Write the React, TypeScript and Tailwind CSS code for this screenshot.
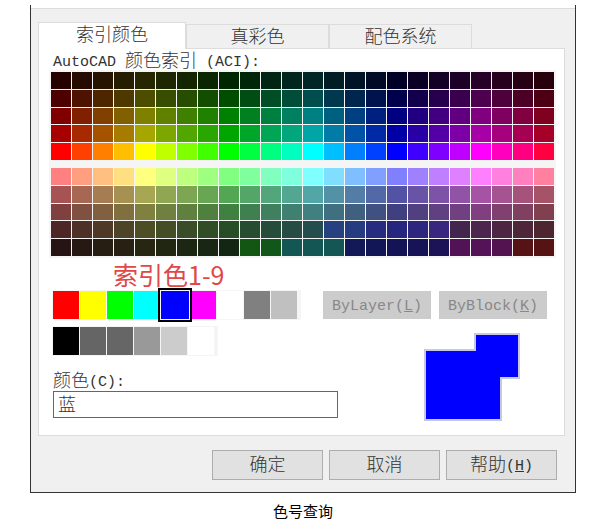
import { useState } from 'react';
import type { ReactNode } from 'react';
import clsx from 'clsx';

const COLUMNS = 24;

const tabs = ['索引颜色', '真彩色', '配色系统'];

const standardColors = [
  { index: 1, name: '红', hex: '#ff0000' },
  { index: 2, name: '黄', hex: '#ffff00' },
  { index: 3, name: '绿', hex: '#00ff00' },
  { index: 4, name: '青', hex: '#00ffff' },
  { index: 5, name: '蓝', hex: '#0000ff' },
  { index: 6, name: '洋红', hex: '#ff00ff' },
  { index: 7, name: '白', hex: '#ffffff' },
  { index: 8, name: '8', hex: '#808080' },
  { index: 9, name: '9', hex: '#c0c0c0' },
];

const grayColors = [
  { index: 250, name: '250', hex: '#000000' },
  { index: 251, name: '251', hex: '#656565' },
  { index: 252, name: '252', hex: '#666666' },
  { index: 253, name: '253', hex: '#999999' },
  { index: 254, name: '254', hex: '#cccccc' },
  { index: 255, name: '255', hex: '#ffffff' },
];

// The darkest shades do not follow the hue wheel everywhere
const dimOverrides: Record<number, string> = {
  13: '#264080',
  14: '#263c80',
  15: '#262c80',
  16: '#26267f',
  17: '#2d267f',
  18: '#38267f',
};

const darkOverrides: Record<number, string> = {
  9: '#135613',
  10: '#13561a',
  11: '#135654',
  12: '#135654',
  13: '#135654',
  14: '#131856',
  15: '#131656',
  16: '#131356',
  17: '#161356',
  18: '#1c1356',
  19: '#521356',
  20: '#541356',
  21: '#521350',
  22: '#561316',
  23: '#561313',
};

interface Shade {
  value: number;
  saturation: number;
  overrides?: Record<number, string>;
}

const fullShades: Shade[] = [
  { value: 0.15, saturation: 1 },
  { value: 0.3, saturation: 1 },
  { value: 0.5, saturation: 1 },
  { value: 0.65, saturation: 1 },
  { value: 1, saturation: 1 },
];

const paleShades: Shade[] = [
  { value: 1, saturation: 0.5 },
  { value: 0.65, saturation: 0.5 },
  { value: 0.5, saturation: 0.5 },
  { value: 0.3, saturation: 0.5, overrides: dimOverrides },
  { value: 0.15, saturation: 0.5, overrides: darkOverrides },
];

function hsv(hue: number, saturation: number, value: number) {
  const channel = (n: number) => {
    const k = (n + hue / 60) % 6;
    const c = value - value * saturation * Math.max(0, Math.min(k, 4 - k, 1));
    return Math.round(c * 255);
  };
  return `rgb(${channel(5)}, ${channel(3)}, ${channel(1)})`;
}

function Latin({ children }: { children: ReactNode }) {
  return (
    <span className="inline-block align-[1px] whitespace-pre font-['Liberation_Mono',monospace] text-[15px] leading-none font-normal">
      {children}
    </span>
  );
}

interface PaletteProps {
  shades: Shade[];
  onPick: (hex: string, name: string) => void;
}

function Palette({ shades, onPick }: PaletteProps) {
  return (
    <div className="grid h-[88px] grid-cols-[repeat(24,minmax(0,1fr))] grid-rows-5 gap-px">
      {shades.map((shade, row) =>
        Array.from({ length: COLUMNS }, (_, col) => {
          const color = shade.overrides?.[col] ?? hsv(col * 15, shade.saturation, shade.value);
          return (
            <button
              key={`${row}-${col}`}
              type="button"
              aria-label={color}
              onClick={() => onPick(color, color)}
              style={{ backgroundColor: color }}
            />
          );
        })
      )}
    </div>
  );
}

interface SwatchRowProps {
  colors: typeof standardColors;
  selected: string;
  onPick: (hex: string, name: string) => void;
}

function SwatchRow({ colors, selected, onPick }: SwatchRowProps) {
  return (
    <div className="flex w-fit gap-px bg-[#f5f5f5] py-px pr-1 pl-px">
      {colors.map(({ index, name, hex }) => (
        <button
          key={index}
          type="button"
          aria-label={name}
          onClick={() => onPick(hex, name)}
          className={clsx(
            'h-7',
            selected === name
              ? 'relative z-10 w-7 outline-2 outline-offset-1 outline-black'
              : 'w-[26px]'
          )}
          style={{ backgroundColor: hex }}
        />
      ))}
    </div>
  );
}

function ActionButton({ children }: { children: ReactNode }) {
  return (
    <button
      type="button"
      className="h-[30px] w-[111px] border border-[#adadad] bg-[#e1e1e1] pb-1"
    >
      {children}
    </button>
  );
}

export default function App() {
  const [activeTab, setActiveTab] = useState(tabs[0]);
  const [color, setColor] = useState({ hex: '#0000ff', name: '蓝' });

  const pick = (hex: string, name: string) => setColor({ hex, name });

  return (
    <main className="bg-white pt-[5px] pr-6 pl-[30px] font-['Noto_Sans_CJK_SC',sans-serif] text-[18px] leading-5 font-light text-[#333]">
      <section className="border-x border-b border-[#333] pt-[3px]">
        <div className="border-t border-[#dcdcdc] bg-[#f0f0f0] pt-[13px] pr-[10px] pb-3 pl-[7px]">
          {/* Tabs */}
          <div role="tablist" className="flex items-end">
            {tabs.map((tab) => (
              <button
                key={tab}
                type="button"
                role="tab"
                aria-selected={activeTab === tab}
                onClick={() => setActiveTab(tab)}
                className={clsx(
                  'border border-b-0 border-[#dcdcdc]',
                  activeTab === tab
                    ? 'relative z-10 -mb-px h-[27px] w-[148px] bg-white pb-1.5'
                    : 'h-6 w-[143px] bg-[#f0f0f0] pb-1'
                )}
              >
                {tab}
              </button>
            ))}
          </div>

          {/* Index color panel */}
          <div className="border border-[#dcdcdc] bg-white pr-2 pb-[14px] pl-[10px]">
            <h2 className="h-[21px] pl-1">
              <Latin>AutoCAD </Latin>颜色索引<Latin> (ACI):</Latin>
            </h2>
            <div className="flex flex-col gap-2 bg-[#f5f5f5] p-0.5">
              <Palette shades={fullShades} onPick={pick} />
              <Palette shades={paleShades} onPick={pick} />
            </div>

            <p className="pl-16 text-[25px] leading-8 font-normal text-[#e04848]">索引色1-9</p>

            <div className="flex items-center justify-between pr-[9px] pl-[3px]">
              <SwatchRow colors={standardColors} selected={color.name} onPick={pick} />
              <div className="flex gap-2 text-[#888]">
                <button type="button" disabled className="h-7 w-[108px] bg-[#ccc] pb-1">
                  <Latin>ByLayer(<u>L</u>)</Latin>
                </button>
                <button type="button" disabled className="h-7 w-[108px] bg-[#ccc] pb-1">
                  <Latin>ByBlock(<u>K</u>)</Latin>
                </button>
              </div>
            </div>

            <div className="mt-1.5 flex justify-between pr-9 pl-[3px]">
              <div>
                <SwatchRow colors={grayColors} selected={color.name} onPick={pick} />
                <label htmlFor="color-name" className="mt-[13px] block h-[22px] pl-px">
                  颜色<Latin>(C):</Latin>
                </label>
                <input
                  id="color-name"
                  type="text"
                  value={color.name}
                  onChange={(e) => setColor({ ...color, name: e.target.value })}
                  className="ml-px block h-[27px] w-[285px] border border-[#666] bg-white px-1 pb-1"
                />
              </div>
              <svg width="96" height="88" viewBox="0 0 96 88" className="mt-[7px]" aria-hidden="true">
                <path
                  d="M1 17H51V1H95V45H77V87H1Z"
                  fill={color.hex}
                  stroke="#c6c8e6"
                  strokeWidth="2"
                />
              </svg>
            </div>
          </div>

          {/* Dialog actions */}
          <div className="mt-[14px] mr-2 flex justify-end gap-1.5">
            <ActionButton>确定</ActionButton>
            <ActionButton>取消</ActionButton>
            <ActionButton>
              帮助<Latin>(<u>H</u>)</Latin>
            </ActionButton>
          </div>
        </div>
      </section>

      <p className="mt-2 text-center text-[15px] font-normal text-black">色号查询</p>
    </main>
  );
}
